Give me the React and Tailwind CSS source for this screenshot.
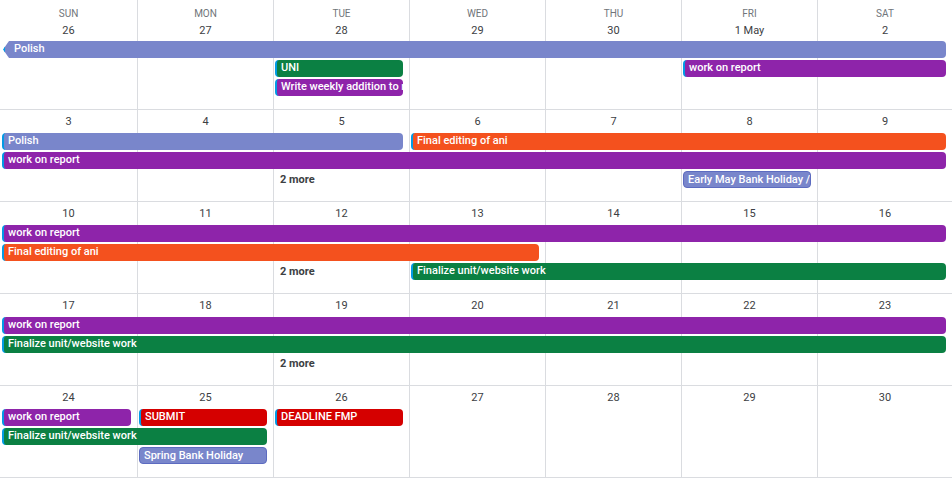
const COL = { 1: "col-start-1", 2: "col-start-2", 3: "col-start-3", 4: "col-start-4", 5: "col-start-5", 6: "col-start-6", 7: "col-start-7" };
const SPAN = { 1: "col-span-1", 2: "col-span-2", 3: "col-span-3", 4: "col-span-4", 5: "col-span-5", 6: "col-span-6", 7: "col-span-7" };
const ROW = { 2: "row-start-2", 3: "row-start-3", 4: "row-start-4" };
const COLORS = {
  lavender: "bg-[#7986cb]",
  purple: "bg-[#8e24aa]",
  green: "bg-[#0b8043]",
  orange: "bg-[#f4511e]",
  red: "bg-[#d50000]",
};

const weeks = [
  {
    days: [26, 27, 28, 29, 30, "1 May", 2],
    head: true,
    events: [
      { t: "Polish", c: 1, s: 7, r: 2, col: "lavender", arrow: true },
      { t: "UNI", c: 3, s: 1, r: 3, col: "green" },
      { t: "work on report", c: 6, s: 2, r: 3, col: "purple" },
      { t: "Write weekly addition to rep", c: 3, s: 1, r: 4, col: "purple" },
    ],
  },
  {
    days: [3, 4, 5, 6, 7, 8, 9],
    events: [
      { t: "Polish", c: 1, s: 3, r: 2, col: "lavender" },
      { t: "Final editing of ani", c: 4, s: 4, r: 2, col: "orange" },
      { t: "work on report", c: 1, s: 7, r: 3, col: "purple" },
      { more: true, c: 3, r: 4 },
      { t: "Early May Bank Holiday / VE", c: 6, s: 1, r: 4, col: "lavender", plain: true },
    ],
  },
  {
    days: [10, 11, 12, 13, 14, 15, 16],
    events: [
      { t: "work on report", c: 1, s: 7, r: 2, col: "purple" },
      { t: "Final editing of ani", c: 1, s: 4, r: 3, col: "orange" },
      { more: true, c: 3, r: 4 },
      { t: "Finalize unit/website work", c: 4, s: 4, r: 4, col: "green" },
    ],
  },
  {
    days: [17, 18, 19, 20, 21, 22, 23],
    events: [
      { t: "work on report", c: 1, s: 7, r: 2, col: "purple" },
      { t: "Finalize unit/website work", c: 1, s: 7, r: 3, col: "green" },
      { more: true, c: 3, r: 4 },
    ],
  },
  {
    days: [24, 25, 26, 27, 28, 29, 30],
    events: [
      { t: "work on report", c: 1, s: 1, r: 2, col: "purple" },
      { t: "SUBMIT", c: 2, s: 1, r: 2, col: "red" },
      { t: "DEADLINE FMP", c: 3, s: 1, r: 2, col: "red" },
      { t: "Finalize unit/website work", c: 1, s: 2, r: 3, col: "green" },
      { t: "Spring Bank Holiday", c: 2, s: 1, r: 4, col: "lavender", plain: true },
    ],
  },
];

const names = ["SUN", "MON", "TUE", "WED", "THU", "FRI", "SAT"];

function Event({ e }) {
  if (e.more)
    return (
      <div className={`${COL[e.c]} col-span-1 ${ROW[e.r]} z-10 pl-[7px] text-[11px] font-bold text-[#3c4043] leading-[17px]`}>
        2 more
      </div>
    );
  return (
    <div
      className={`${COL[e.c]} ${SPAN[e.s]} ${ROW[e.r]} z-10 h-[17px] ml-[2px] mr-[6px] ${COLORS[e.col]} ${e.plain ? "border border-[#5c6bc0]" : "border-l-2 border-[#039be5]"} ${e.arrow ? "[clip-path:polygon(6px_0,100%_0,100%_100%,6px_100%,0_50%)] pl-[9px] ml-[3px]" : "pl-[4px]"} rounded-[4px] text-white text-[11px] font-medium leading-[16px] whitespace-nowrap overflow-hidden`}
    >
      {e.t}
    </div>
  );
}

export default function App() {
  return (
    <div className="w-[952px] h-[478px] bg-white overflow-hidden font-[Roboto]">
      {weeks.map((w, wi) => (
        <div
          key={wi}
          className={`grid grid-cols-[137px_136px_136px_136px_136px_136px_135px] ${w.head ? "h-[110px] grid-rows-[41px_19px_19px_19px_1fr]" : "h-[92px] grid-rows-[23px_19px_19px_19px_1fr]"} border-b border-[#dadce0]`}
        >
          {w.days.map((d, i) => (
            <div
              key={i}
              className={`${COL[i + 1]} row-start-1 row-span-5 ${i > 0 ? "border-l" : ""} border-[#dadce0] flex flex-col items-center text-[#3c4043]`}
            >
              {w.head && <div className="text-[10px] text-[#70757a] mt-[8px] leading-[12px]">{names[i]}</div>}
              <div className={`text-[11px] leading-[14px] ${w.head ? "mt-[4px]" : "mt-[5px]"}`}>{d}</div>
            </div>
          ))}
          {w.events.map((e, i) => (
            <Event key={i} e={e} />
          ))}
        </div>
      ))}
    </div>
  );
}
